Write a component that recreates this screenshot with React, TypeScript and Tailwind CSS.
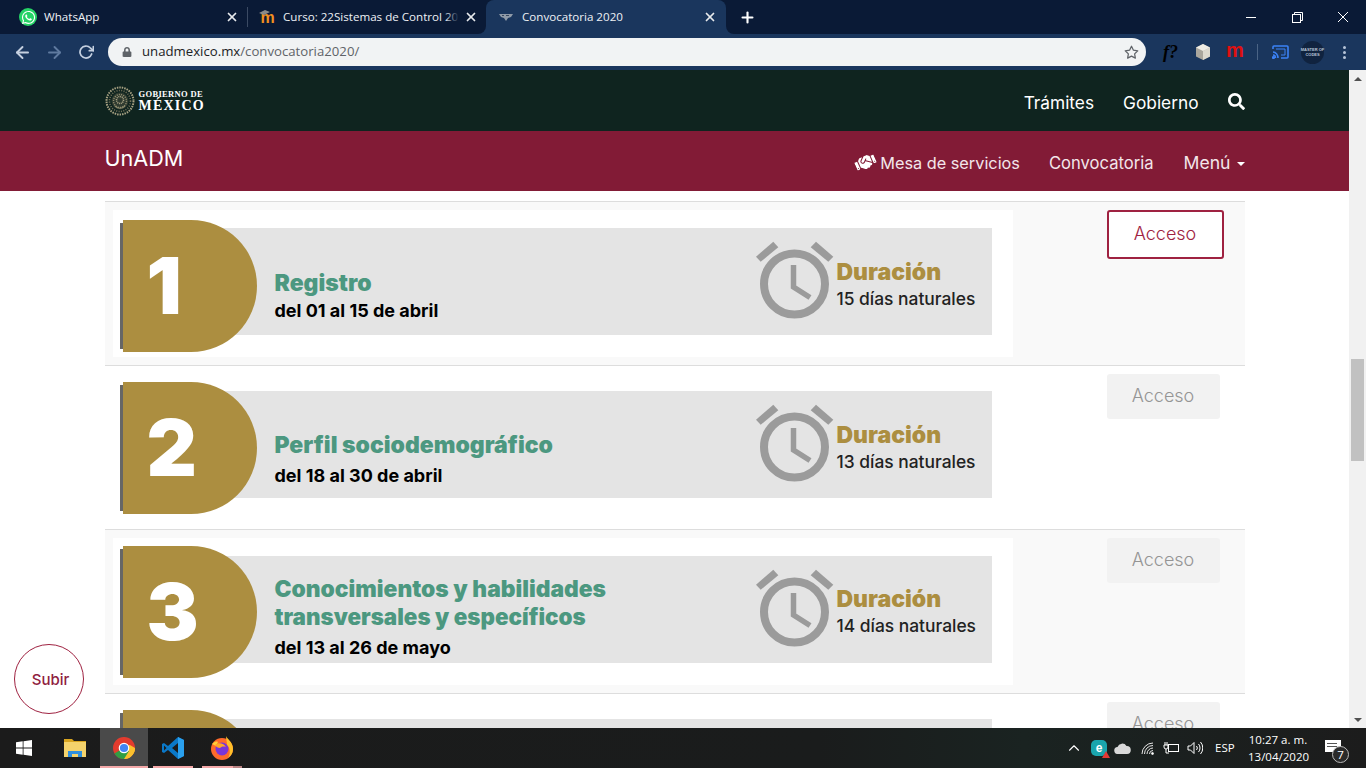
import React from "react";
import { FaWhatsapp, FaHandshake, FaSearch } from "react-icons/fa";
import { FiArrowLeft, FiArrowRight, FiRotateCw, FiX, FiPlus, FiStar, FiChevronUp } from "react-icons/fi";
import { FaLock } from "react-icons/fa";

const sans = "font-['Inter',sans-serif]";

function Clock() {
  return (
    <svg width="80" height="80" viewBox="0 0 80 80" className="mt-[12px] shrink-0">
      <circle cx="39.5" cy="44" r="30.5" fill="none" stroke="#9b9b9b" strokeWidth="8" />
      <polygon points="1,16.7 18.3,1.7 23.3,7.3 5.7,21.7" fill="#9b9b9b" />
      <polygon points="55.7,7.3 61,1.7 78.3,16.7 73.3,21.7" fill="#9b9b9b" />
      <polyline points="38.5,25 38.5,47 55,57.5" fill="none" stroke="#9b9b9b" strokeWidth="5.5" />
    </svg>
  );
}

type Step = {
  n: string;
  title: [string, string][];
  date: string;
  days: string;
  bg: string;
  top: string;
  gap: string;
  edgeMt: string;
  dMt: string;
  bandMt: string;
  durPt: string;
  active?: boolean;
};

const steps: Step[] = [
  { n: "1", title: [["Registro", "text-[23px]"]], date: "del 01 al 15 de abril", days: "15 días naturales", bg: "bg-[#f9f9f9]", top: "pt-[41px]", gap: "mt-[4px]", edgeMt: "mt-[13px]", dMt: "mt-[10px]", bandMt: "mt-[18px]", durPt: "pt-[30px]", active: true },
  { n: "2", title: [["Perfil sociodemográfico", "text-[23px]"]], date: "del 18 al 30 de abril", days: "13 días naturales", bg: "bg-white", top: "pt-[40px]", gap: "mt-[7px]", edgeMt: "mt-[11px]", dMt: "mt-[8px]", bandMt: "mt-[17px]", durPt: "pt-[30px]" },
  { n: "3", title: [["Conocimientos y habilidades", "text-[22.8px]"], ["transversales y específicos", "text-[22.4px]"]], date: "del 13 al 26 de mayo", days: "14 días naturales", bg: "bg-[#f9f9f9]", top: "pt-[19px]", gap: "mt-[7px]", edgeMt: "mt-[11px]", dMt: "mt-[8px]", bandMt: "mt-[18px]", durPt: "pt-[29px]" },
];

function Banner({ s }: { s: Step }) {
  return (
    <div className="w-[900px] h-[147px] bg-white flex items-start pl-[7px] pr-[21px] shrink-0">
      <div className={`${s.edgeMt} w-[3px] h-[126px] bg-[#666666] shrink-0`} />
      <div className={`relative z-10 ${s.dMt} w-[134px] h-[132px] rounded-r-[66px] bg-[#ac8e40] shrink-0 flex items-center pl-[24px]`}>
        <span className={`${sans} text-[78px] leading-none font-black text-white`}>{s.n}</span>
      </div>
      <div className={`-ml-[60px] ${s.bandMt} flex-1 h-[107px] bg-[#e4e4e4] flex pl-[78px] pr-[17px]`}>
        <div className={`flex-1 ${s.top}`}>
          {s.title.map(([t, size]) => (
            <div key={t} className={`${sans} ${size} leading-[28px] font-black text-[#4c9880] whitespace-nowrap`}>{t}</div>
          ))}
          <div className={`${sans} ${s.gap} text-[18px] leading-[20px] font-bold text-black whitespace-nowrap`}>{s.date}</div>
        </div>
        {s.days && <Clock />}
        {s.days && (
          <div className={`w-[138px] ml-[2px] ${s.durPt} shrink-0`}>
            <div className={`${sans} text-[23px] leading-[28px] font-black text-[#ac8e40]`}>Duración</div>
            <div className={`${sans} mt-[1px] text-[17.4px] leading-[24px] font-medium text-[#222222] whitespace-nowrap`}>{s.days}</div>
          </div>
        )}
      </div>
    </div>
  );
}

function Row({ s }: { s: Step }) {
  return (
    <div className={`flex border-t border-[#dddddd] h-[164px] px-2 pt-2 ${s.bg}`}>
      <Banner s={s} />
      {s.active ? (
        <button className={`${sans} ml-[94px] w-[117px] h-[49px] pb-[2px] rounded-[3px] border-2 border-[#9f2241] bg-white text-[18px] font-light text-[#9f2241]`}>Acceso</button>
      ) : (
        <button className={`${sans} ml-[94px] w-[113px] h-[45px] pb-[2px] rounded-[3px] bg-[#f2f2f2] text-[18px] font-light text-[#959595]`}>Acceso</button>
      )}
    </div>
  );
}

function EagleLogo() {
  return (
    <svg width="30" height="30" viewBox="0 0 30 30" className="shrink-0">
      <circle cx="15" cy="15" r="13.5" fill="none" stroke="#a8a283" strokeWidth="2" strokeDasharray="1.5 1" />
      <circle cx="15" cy="15" r="10.5" fill="none" stroke="#77735a" strokeWidth="1.6" strokeDasharray="1 1.4" />
      <circle cx="15" cy="15" r="8.5" fill="#2f3b30" />
      <circle cx="15" cy="15" r="6.5" fill="none" stroke="#8f8b6d" strokeWidth="1.4" strokeDasharray="1.2 1" />
      <circle cx="15" cy="14" r="3.5" fill="none" stroke="#a8a283" strokeWidth="1.6" strokeDasharray="1 0.8" />
      <path d="M10 20c3 3 7 3 10 0" fill="none" stroke="#8b8a6c" strokeWidth="1.2" />
    </svg>
  );
}

function TabClose() {
  return <FiX className="text-[#e8eaed] shrink-0" size={14} strokeWidth={3} />;
}

function TabStrip() {
  const tabText = "font-['Open_Sans',sans-serif] text-[11.6px] text-[#eef1f5] whitespace-nowrap";
  return (
    <div className="h-[34px] flex bg-[linear-gradient(#0a1a36_50%,#1a365d_50%)]">
      <div className="w-[486px] h-full bg-[#0a1a36] rounded-br-[8px] flex items-center">
        <div className="w-[247px] flex items-center pl-[19px] pr-[8px] h-full">
          <span className="w-[18px] h-[18px] rounded-full bg-[#25d366] flex items-center justify-center shrink-0">
            <FaWhatsapp className="text-white" size={15} />
          </span>
          <span className={`${tabText} ml-[7px] flex-1`}>WhatsApp</span>
          <TabClose />
        </div>
        <div className="w-px h-[20px] bg-[#3b4a63]" />
        <div className="flex-1 flex items-center pl-[11px] pr-[8px] h-full">
          <span className="relative w-[17px] h-[16px] shrink-0 flex items-end justify-center">
            <svg width="17" height="8" viewBox="0 0 17 8" className="absolute top-[1px] left-0">
              <polygon points="0,3 6,0 11,2 5,5" fill="#8a8a8a" />
            </svg>
            <span className="font-['Liberation_Sans',sans-serif] text-[16px] leading-[14px] font-bold text-[#f18f1f]">m</span>
          </span>
          <span className={`${tabText} ml-[7px] w-[176px] overflow-hidden`}>Curso: 22Sistemas de Control 2020</span>
          <span className="relative -ml-[14px] w-[14px] h-[16px] bg-[linear-gradient(90deg,transparent,#0a1a36)]" />
          <span className="ml-auto"><TabClose /></span>
        </div>
      </div>
      <div className="w-[240px] h-full bg-[#1a365d] rounded-t-[8px] flex items-center pl-[13px] pr-[9px]">
        <svg width="14" height="8" viewBox="0 0 14 8" className="shrink-0">
          <path d="M0 1h14l-2 3-3 1-2 3-2-3-3-1z" fill="#8f9aa8" />
          <path d="M3 2h2v1H3zM7 2h3v1H7z" fill="#36465e" />
        </svg>
        <span className={`${tabText} ml-[9px] flex-1`}>Convocatoria 2020</span>
        <TabClose />
      </div>
      <div className="flex-1 h-full bg-[#0a1a36] rounded-bl-[8px] flex items-center">
        <FiPlus className="text-white ml-[13px]" size={17} strokeWidth={3} />
        <div className="ml-auto flex items-center h-full">
          <span className="w-[46px] flex justify-center"><span className="block w-[10px] h-px bg-white" /></span>
          <span className="w-[46px] flex justify-center">
            <svg width="11" height="11" viewBox="0 0 11 11" fill="none" stroke="#fff"><rect x="0.5" y="2.5" width="8" height="8" /><path d="M2.5 2.5v-2h8v8h-2" /></svg>
          </span>
          <span className="w-[46px] flex justify-center">
            <svg width="12" height="12" viewBox="0 0 12 12" stroke="#fff"><path d="M1 1l10 10M11 1L1 11" /></svg>
          </span>
        </div>
      </div>
    </div>
  );
}

function Toolbar() {
  return (
    <div className="h-[36px] bg-[#1a365d] flex items-center">
      <FiArrowLeft className="ml-[13px] text-[#c5d0e0]" size={19} strokeWidth={2.4} />
      <FiArrowRight className="ml-[13px] text-[#5f7a9f]" size={19} strokeWidth={2.4} />
      <FiRotateCw className="ml-[14px] text-[#c5d0e0]" size={16} strokeWidth={2.6} />
      <div className="ml-[14px] w-[1038px] h-[28px] rounded-full bg-[#f1f3f4] flex items-center pl-[14px] pr-[7px]">
        <FaLock className="text-[#5f6368]" size={10} />
        <span className="ml-[10px] font-['Open_Sans',sans-serif] text-[13.2px] text-[#202124]">unadmexico.mx<span className="text-[#5f6368]">/convocatoria2020/</span></span>
        <FiStar className="ml-auto text-[#5f6368]" size={15} strokeWidth={2} />
      </div>
      <span className="ml-[17px] w-[16px] font-['Liberation_Serif',serif] italic font-bold text-[18px] leading-[18px] text-black">f?</span>
      <svg width="18" height="18" viewBox="0 0 18 18" className="ml-[15px]">
        <polygon points="9,1 16,4.5 16,13.5 9,17 2,13.5 2,4.5" fill="#a9a69d" />
        <polygon points="9,8 16,4.5 16,13.5 9,17" fill="#dcd9cf" />
        <polygon points="9,1 16,4.5 9,8 2,4.5" fill="#eeece4" />
      </svg>
      <span className="ml-[14px] w-[18px] font-['Liberation_Sans',sans-serif] font-bold text-[20px] leading-[20px] -mt-[4px] text-[#e01010]">m</span>
      <div className="ml-[13px] w-px h-[16px] bg-[#4b6485]" />
      <svg width="17" height="14" viewBox="0 0 17 14" className="ml-[14px]" fill="none" stroke="#3b82f6" strokeWidth="1.6">
        <path d="M1 4V2a1 1 0 0 1 1-1h13a1 1 0 0 1 1 1v10a1 1 0 0 1-1 1H9" />
        <path d="M1 7c3 0 5 3 5 6M1 10c1.500 0 2.500 1.500 2.500 3" />
        <circle cx="1.500" cy="12.500" r="0.8" fill="#3b82f6" />
        <path d="M4 4h9v6H9" strokeWidth="1" />
      </svg>
      <span className="ml-[12px] w-[23px] h-[23px] rounded-full bg-[#10233f] flex flex-col items-center justify-center font-['Liberation_Sans',sans-serif] text-[4px] leading-[5px] font-bold text-[#b9c6d8]">
        <span className="whitespace-nowrap">MASTER OF</span>
        <span>CODES</span>
      </span>
      <span className="ml-[19px] flex flex-col gap-[2px]">
        <span className="block w-[3px] h-[3px] rounded-full bg-[#b6c4d8]" />
        <span className="block w-[3px] h-[3px] rounded-full bg-[#b6c4d8]" />
        <span className="block w-[3px] h-[3px] rounded-full bg-[#b6c4d8]" />
      </span>
    </div>
  );
}

function PageContent() {
  return (
    <div className="relative flex-1 min-w-0 h-full overflow-hidden bg-white">
      <div className="h-[61px] bg-[#0f241f]">
        <div className="w-[1140px] mx-auto h-full flex items-center">
          <EagleLogo />
          <div className="ml-[4px] mt-[1px] font-['Liberation_Serif',serif] font-bold text-white">
            <div className="text-[8.5px] leading-[10px] tracking-[0.35px] whitespace-nowrap">GOBIERNO DE</div>
            <div className="text-[14px] leading-[14px] tracking-[1.2px]">MÉXICO</div>
          </div>
          <div className={`${sans} ml-auto mt-[5px] flex items-center text-[17.3px] text-white`}>
            <span>Trámites</span>
            <span className="ml-[29px]">Gobierno</span>
            <FaSearch className="ml-[29px] -mt-[3px]" size={17} />
          </div>
        </div>
      </div>
      <div className="h-[60px] bg-[#821b36]">
        <div className={`${sans} w-[1140px] mx-auto h-full flex items-center text-white`}>
          <span className="text-[21.6px] -mt-[5px]">UnADM</span>
          <div className="ml-auto flex items-center text-[16.6px] mt-[4px] text-[#f3e6ea]">
            <FaHandshake size={21} className="text-white -rotate-[24deg]" />
            <span className="ml-[4px] text-[16.3px]">Mesa de servicios</span>
            <span className="ml-[29px]">Convocatoria</span>
            <span className="ml-[30px] text-[17.6px]">Menú</span>
            <span className="ml-[6px] mt-[2px] w-0 h-0 border-x-[4px] border-x-transparent border-t-[4px] border-t-white" />
          </div>
        </div>
      </div>
      <div className="w-[1140px] mx-auto pt-[10px]">
        {steps.map((s) => (
          <Row key={s.n} s={s} />
        ))}
        <Row s={{ n: "4", title: [], date: "", days: "", bg: "bg-white", top: "", gap: "", edgeMt: "mt-[11px]", dMt: "mt-[8px]", bandMt: "mt-[17px]", durPt: "" }} />
      </div>
      <div className={`${sans} absolute left-[14px] bottom-[14px] w-[70px] h-[70px] pl-[3px] pt-[3px] rounded-full border border-[#9f2241] bg-white flex items-center justify-center text-[15px] font-medium text-[#8f2140]`}>Subir</div>
    </div>
  );
}

function Scrollbar() {
  return (
    <div className="w-[17px] h-full bg-[#f1f1f1] flex flex-col items-center shrink-0">
      <div className="h-[17px] flex items-center justify-center">
        <span className="w-0 h-0 border-x-[4px] border-x-transparent border-b-[4px] border-b-[#505050]" />
      </div>
      <div className="mt-[272px] w-[13px] h-[102px] bg-[#c1c1c1]" />
      <div className="mt-auto h-[17px] flex items-center justify-center">
        <span className="w-0 h-0 border-x-[4px] border-x-transparent border-t-[4px] border-t-[#505050]" />
      </div>
    </div>
  );
}

function Chrome() {
  return (
    <svg width="24" height="24" viewBox="0 0 24 24">
      <circle cx="12" cy="12" r="11" fill="#e33b2e" />
      <path d="M12 12H23A11 11 0 0 1 12 23z" fill="#fbc02d" />
      <path d="M12 12l5.500-3.200L23 12A11 11 0 0 1 12 23z" fill="#fbc02d" />
      <path d="M7.500 14.600L2.470 17.500A11 11 0 0 0 12 23l5-8z" fill="#2f9e44" />
      <circle cx="12" cy="12" r="5.300" fill="#fff" />
      <circle cx="12" cy="12" r="4.100" fill="#4285f4" />
    </svg>
  );
}

function Taskbar() {
  const ind = "absolute bottom-0 h-[2px] bg-[#f3a8a8]";
  const tray = "font-['Open_Sans',sans-serif] text-[11.5px] text-white";
  return (
    <div className="relative h-[40px] shrink-0 bg-[linear-gradient(90deg,#1b1b1b,#1a1c1c_60%,#1a2321_75%,#1c1c1c)] flex items-center">
      <svg width="16" height="16" viewBox="0 0 16 16" className="ml-[16px]" fill="#fff">
        <polygon points="0,2.300 6.700,1.300 6.700,7.600 0,7.600" />
        <polygon points="7.500,1.200 16,0 16,7.600 7.500,7.600" />
        <polygon points="0,8.400 6.700,8.400 6.700,14.700 0,13.700" />
        <polygon points="7.500,8.400 16,8.400 16,16 7.500,14.800" />
      </svg>
      <svg width="22" height="20" viewBox="0 0 22 20" className="ml-[32px]">
        <path d="M0 1h8l2 2h12v4H0z" fill="#d9a520" />
        <rect x="0" y="4" width="22" height="15" fill="#f5d36c" />
        <path d="M4 19v-6h14v6h-4v-3H8v3z" fill="#2f8fdd" />
      </svg>
      <div className="ml-[14px] w-[48px] h-full bg-[#4a4a4a] flex items-center justify-center"><Chrome /></div>
      <svg width="24" height="24" viewBox="0 0 24 24" className="ml-[13px]">
        <path d="M17 1L7 10 3 7 1 8v8l2 1 4-3 10 9 6-3V4zM17 7l-6 5 6 5zM3 9.500L5.500 12 3 14.500z" fill="#0a78c8" fillRule="evenodd" />
        <path d="M17 1l6 3v16l-6 3z" fill="#2aa0ee" />
      </svg>
      <svg width="24" height="24" viewBox="0 0 24 24" className="ml-[25px]">
        <circle cx="12" cy="13" r="11" fill="#ff6a2b" />
        <path d="M16 0c1 3 7 6 7 13a11 11 0 0 1-5 9c3-5 2-10-1-13 0-3-1-6-1-9z" fill="#ffc02a" />
        <path d="M2 8c2-2 4-3 6-2L6 10z" fill="#ffcf3a" />
        <circle cx="12" cy="13" r="6.500" fill="#7b35d8" />
        <path d="M5 9c3-3 9-2 11 2-3-1-5 0-6 1-2 0-4-1-5-3z" fill="#ffa726" />
      </svg>
      <span className={`${ind} left-[100px] w-[48px]`} />
      <span className={`${ind} left-[153px] w-[40px]`} />
      <span className={`${ind} left-[202px] w-[31px]`} />
      <span className="absolute bottom-0 left-[233px] w-[9px] h-[2px] bg-[#b98484]" />

      <div className="ml-auto flex items-center h-full">
        <FiChevronUp className="text-white" size={18} strokeWidth={1.5} />
        <span className="relative ml-[8px] w-[16px] h-[16px] rounded-[5px] bg-[#1aa5ad] flex items-center justify-center font-['Liberation_Sans',sans-serif] font-bold text-[12px] leading-none text-white">
          e
          <span className="absolute -right-[3px] -bottom-[2px] w-0 h-0 border-x-[4px] border-x-transparent border-b-[7px] border-b-[#e53935]" />
        </span>
        <svg width="17" height="11" viewBox="0 0 17 11" className="ml-[7px]" fill="#d9d9d9">
          <path d="M4 11a3.500 3.500 0 0 1-.5-7A5 5 0 0 1 12.500 3 4 4 0 0 1 13 11z" />
        </svg>
        <svg width="13" height="13" viewBox="0 0 13 13" fill="none" stroke="#e6e6e6" className="ml-[10px]">
          <path d="M1 12a11 11 0 0 1 11-11" />
          <path d="M3.500 12a8.500 8.500 0 0 1 8.500-8.500" />
          <path d="M6 12a6 6 0 0 1 6-6" />
          <path d="M8.500 12a3.500 3.500 0 0 1 3.500-3.500" />
          <circle cx="11.500" cy="11.500" r="1" fill="#fff" />
        </svg>
        <svg width="16" height="12" viewBox="0 0 16 12" fill="none" stroke="#fff" className="ml-[9px]">
          <rect x="5.500" y="2.500" width="10" height="7" />
          <path d="M2 0v3M4 0v3M1 3h4v2a2 2 0 0 1-4 0zM3 7v4h3" />
        </svg>
        <svg width="16" height="14" viewBox="0 0 16 14" fill="none" stroke="#fff" className="ml-[8px]">
          <path d="M1 5h2.500L7 1.500v11L3.500 9H1z" />
          <path d="M9.500 5a3 3 0 0 1 0 4M11.500 3a6 6 0 0 1 0 8M13.500 1a9 9 0 0 1 0 12" />
        </svg>
        <span className={`${tray} ml-[12px] w-[20px]`}>ESP</span>
        <div className={`${tray} ml-[13px] w-[60px] text-center leading-[17px]`}>
          <div className="whitespace-nowrap">10:27 a. m.</div>
          <div>13/04/2020</div>
        </div>
        <span className="relative ml-[17px] mr-[25px] block w-[16px] h-[12px] -mt-[4px] bg-white">
          <span className="absolute top-[3px] left-[2px] w-[10px] h-px bg-[#555555]" />
          <span className="absolute top-[6px] left-[2px] w-[10px] h-px bg-[#555555]" />
          <span className={`absolute left-[7px] top-[6px] w-[17px] h-[17px] rounded-full bg-[#2a2a2a] border border-[#bbbbbb] flex items-center justify-center ${tray} text-[10px] leading-none`}>7</span>
        </span>
      </div>
    </div>
  );
}

export default function App() {
  return (
    <div className="w-[1366px] h-[768px] flex flex-col overflow-hidden">
      <TabStrip />
      <Toolbar />
      <div className="h-[658px] flex shrink-0">
        <PageContent />
        <Scrollbar />
      </div>
      <Taskbar />
    </div>
  );
}
